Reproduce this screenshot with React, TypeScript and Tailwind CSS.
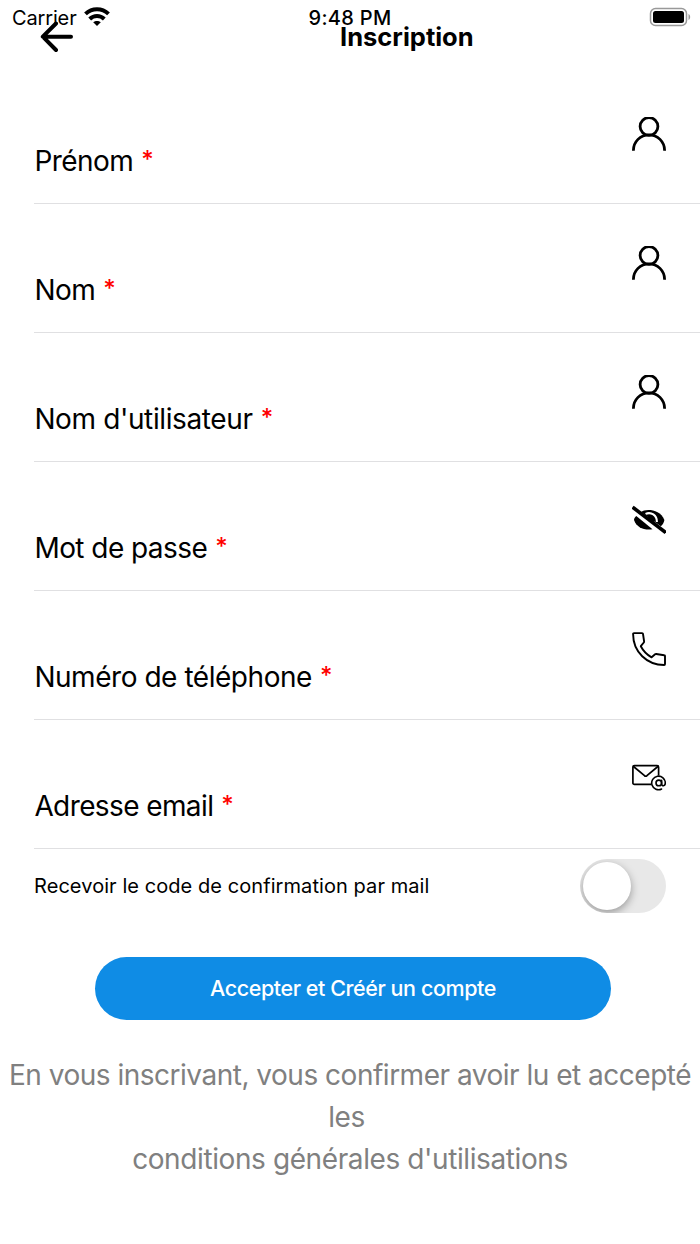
import React from "react";

function UserIcon() {
  return (
    <svg className="size-[34px]" viewBox="0 0 34 34" fill="none" stroke="black" strokeWidth="2.800">
      <circle cx="17" cy="9.500" r="8.900" />
      <path d="M1.400 33.800v-.4a15.600 15.600 0 0 1 31.200 0v.4" />
    </svg>
  );
}

function EyeOffIcon() {
  return (
    <svg className="size-[34px]" viewBox="0 0 34 34">
      <path d="M9 8C13 4.700 28 4.500 32.400 16c-.4 2.500-1.700 4.500-3.600 6.300Z" />
      <path d="M4.300 12C2.700 13.300 2 14.500 2 16c2.500 7.500 10 10.500 18.500 9.300Z" />
      <path d="M13.500 9.900c5.500-2.400 11.500 1.200 11.400 8.100" fill="none" stroke="white" strokeWidth="2.100" />
      <path d="M15 13.300c2.700-2.500 6.800-.8 7 2.900l-.4 3.500Z" />
      <path d="M2 4.200 32.300 27.400" stroke="black" strokeWidth="3.600" strokeLinecap="square" />
    </svg>
  );
}

function PhoneIcon() {
  return (
    <svg className="size-[34px]" viewBox="0 0 34 34" fill="none" stroke="black" strokeWidth="1.900" strokeLinejoin="round">
      <path d="M2 1.100h8.100q.8 0 .9.800l1.100 7.500q.1.600-.3 1.100l-3 3.700c2.500 4.900 5.700 8.200 10.800 11.100l3.500-3q.5-.4 1.100-.3l8 1.200q.8.100.8.900v8q0 .9-.9.900C15 32.900 1.100 20 1.100 2q0-.9.900-.9Z" />
    </svg>
  );
}

function MailIcon() {
  return (
    <svg className="size-[34px]" viewBox="0 0 34 34" fill="none" stroke="black" strokeWidth="1.700" strokeLinecap="round" strokeLinejoin="round">
      <rect x=".9" y="5.700" width="25.700" height="18.700" rx="1.500" />
      <path d="m1.500 6.500 11 9.200q1.200.9 2.400 0l11-9.200" />
      <circle cx="26.600" cy="23" r="7.500" fill="white" stroke="none" />
      <path d="M29.600 29a6.800 6.800 0 1 1 3.700-6c0 3.300-3.500 3.700-3.700.7v-3.500" strokeWidth="1.600" />
      <circle cx="26.800" cy="22.900" r="2.800" strokeWidth="1.600" />
    </svg>
  );
}

const fields = [
  { label: "Prénom", spacing: "tracking-[-0.55px]", iconTop: "pt-[42px]", icon: <UserIcon /> },
  { label: "Nom", spacing: "tracking-[-0.5px]", iconTop: "pt-[42px]", icon: <UserIcon /> },
  { label: "Nom d'utilisateur", spacing: "tracking-[-0.38px]", iconTop: "pt-[42px]", icon: <UserIcon /> },
  { label: "Mot de passe", spacing: "tracking-[-0.55px]", iconTop: "pt-[42px]", icon: <EyeOffIcon /> },
  { label: "Numéro de téléphone", spacing: "tracking-[-0.46px]", iconTop: "pt-[41px]", icon: <PhoneIcon /> },
  { label: "Adresse email", spacing: "tracking-[-0.6px]", iconTop: "pt-[40px]", icon: <MailIcon /> },
];

function StatusBar() {
  return (
    <div className="absolute inset-x-0 top-0 flex h-9 items-center justify-between pl-3 pr-[9px]">
      <div className="flex w-[197px] items-center gap-[7px]">
        <span className="text-[20px] leading-6 tracking-[-0.15px]">Carrier</span>
        <svg className="mb-[3px] h-[19px] w-[26px]" viewBox="0 0 26 19" fill="none" stroke="black" strokeWidth="4">
          <path d="M1.500 6.900c6.500-6.200 16.500-6.200 23 0" />
          <path d="M5.700 12c4.200-4 10.400-4 14.600 0" />
          <path d="m13 19-3.800-3.700c2.200-1.900 5.400-1.900 7.600 0Z" fill="black" stroke="none" />
        </svg>
      </div>
      <span className="text-[20px] font-medium leading-6 tracking-[0.3px]">9:48 PM</span>
      <div className="flex w-[200px] justify-end">
        <svg className="mb-[2px] h-5 w-[42px]" viewBox="0 0 42 20">
          <rect x="1.500" y="1.500" width="36" height="17" rx="5" fill="none" stroke="#999" strokeWidth="1.500" />
          <rect x="4" y="4" width="31" height="12" rx="2.500" />
          <path d="M39.500 7c2.200.8 2.200 5.200 0 6Z" fill="#999" />
        </svg>
      </div>
    </div>
  );
}

export default function App() {
  return (
    <main className="relative h-[1244px] w-[700px] overflow-hidden bg-white font-['Inter',sans-serif] text-black">
      <header className="flex h-[75px] items-start pt-5">
        <svg className="ml-10 h-[34px] w-[34px] shrink-0" viewBox="0 0 34 34" fill="none" stroke="black" strokeWidth="4" strokeLinecap="round" strokeLinejoin="round">
          <path d="M31 16.700H3M16 3.500 2.800 16.700 16 30" />
        </svg>
        <h1 className="ml-[266px] whitespace-nowrap text-[25.5px] font-bold leading-[34px]">Inscription</h1>
      </header>
      <StatusBar />
      <form>
        {fields.map((f) => (
          <label key={f.label} className="ml-[34px] flex h-[129px] items-start justify-between border-b border-[#e0e0e2] pr-[34px]">
            <span className="flex whitespace-nowrap pl-[0.4px] pt-[66px] text-[28px] leading-10">
              <span className={f.spacing}>{f.label}</span>
              <span className="ml-[8px] text-[24px] font-medium leading-[38px] text-[#ff0000]">*</span>
            </span>
            <span className={f.iconTop}>{f.icon}</span>
          </label>
        ))}
        <div className="flex h-[76px] items-center justify-between pb-[2px] pl-[34px] pr-[34px]">
          <span className="whitespace-nowrap pb-px text-[20px] tracking-[0.07px]">Recevoir le code de confirmation par mail</span>
          <button type="button" role="switch" aria-checked="false" className="flex h-[54px] w-[86px] items-center overflow-hidden rounded-full bg-[#e8e8e8] pl-[3px]">
            <span className="size-[48px] rounded-full bg-white shadow-[0_3px_8px_rgba(0,0,0,0.35)]" />
          </button>
        </div>
        <button type="button" className="ml-[95px] mt-[32px] flex h-[63px] w-[516px] items-center justify-center whitespace-nowrap rounded-full bg-[#0f8ce5] text-[21.5px] font-medium tracking-[-0.43px] text-white">
          Accepter et Créér un compte
        </button>
      </form>
      <footer className="mt-[34px] flex flex-col items-center whitespace-nowrap text-[28px] leading-[42px] text-[#808080]">
        <span className="tracking-[-0.49px]">En vous inscrivant, vous confirmer avoir lu et accepté</span>
        <span className="pr-[7px] tracking-[-0.4px]">les</span>
        <span className="tracking-[-0.4px]">conditions générales d'utilisations</span>
      </footer>
    </main>
  );
}
